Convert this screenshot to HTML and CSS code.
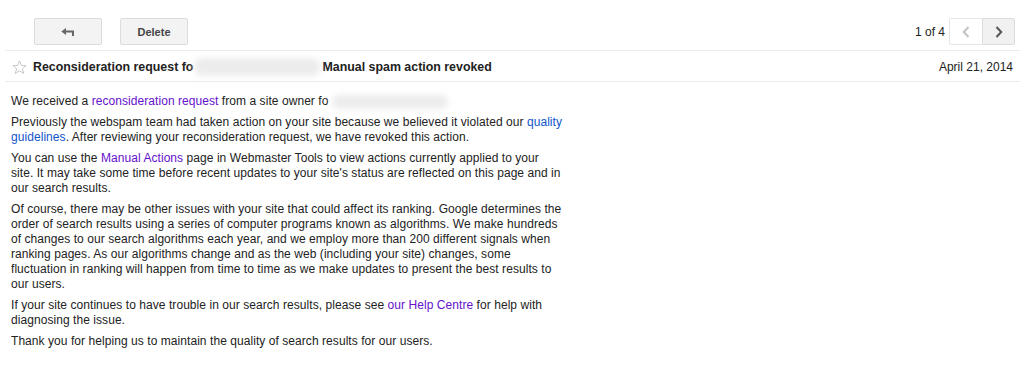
FILE: index.html
```html
<!DOCTYPE html>
<html>

    <head>
        <!-- Meta Data -->
        <meta charset="UTF-8">

        <!-- Title -->
        <title>Manual spam action revoked</title>

        <!-- Style -->
        <link rel="stylesheet" href="styles.css">
    </head>

    <body>
        <div class="page">
            <!-- Toolbar -->
            <div class="toolbar">
                <div class="toolbar-left">
                    <div class="button back-button">
                        <svg width="14" height="8" viewBox="0 0 14 8">
                            <path d="M0.3 3.5 L5 0 L5 2.5 L13 2.5 L13 8 L11 8 L11 4.5 L5 4.5 L5 7 Z" fill="#666"/>
                        </svg>
                    </div>
                    <div class="button">Delete</div>
                </div>
                <div class="toolbar-right">
                    <span class="counter">1 of 4</span>
                    <div class="nav">
                        <div class="nav-button nav-prev">
                            <svg width="8" height="12" viewBox="0 0 8 12">
                                <path d="M6.5 1 L1.8 6 L6.5 11" fill="none" stroke="#c4c4c4" stroke-width="2"/>
                            </svg>
                        </div>
                        <div class="nav-button nav-next">
                            <svg width="8" height="12" viewBox="0 0 8 12">
                                <path d="M1.5 1 L6.2 6 L1.5 11" fill="none" stroke="#555" stroke-width="2"/>
                            </svg>
                        </div>
                    </div>
                </div>
            </div>

            <!-- Header -->
            <div class="header">
                <div class="subject">
                    <svg class="star" width="15" height="15" viewBox="0 0 15 15">
                        <path d="M7.5 0.8 L9.3 5.4 L14.2 5.6 L10.4 8.7 L11.7 13.5 L7.5 10.8 L3.3 13.5 L4.6 8.7 L0.8 5.6 L5.7 5.4 Z" fill="none" stroke="#c8c8c8" stroke-width="1"/>
                    </svg>
                    <span>Reconsideration request fo</span><span class="blur blur-subject"></span><span>Manual spam action revoked</span>
                </div>
                <div class="date">April 21, 2014</div>
            </div>

            <!-- Message -->
            <div class="message">
                <p>We received a <a class="visited" href="#">reconsideration request</a> from a site owner fo<span class="blur blur-body"></span></p>
                <p>Previously the webspam team had taken action on your site because we believed it violated our <a href="#">quality guidelines</a>. After reviewing your reconsideration request, we have revoked this action.</p>
                <p>You can use the <a class="visited" href="#">Manual Actions</a> page in Webmaster Tools to view actions currently applied to your site. It may take some time before recent updates to your site's status are reflected on this page and in our search results.</p>
                <p>Of course, there may be other issues with your site that could affect its ranking. Google determines the order of search results using a series of computer programs known as algorithms. We make hundreds of changes to our search algorithms each year, and we employ more than 200 different signals when ranking pages. As our algorithms change and as the web (including your site) changes, some fluctuation in ranking will happen from time to time as we make updates to present the best results to our users.</p>
                <p>If your site continues to have trouble in our search results, please see <a class="visited" href="#">our Help Centre</a> for help with diagnosing the issue.</p>
                <p>Thank you for helping us to maintain the quality of search results for our users.</p>
            </div>
        </div>
    </body>

</html>
```

FILE: styles.css
```css
html {
    background-color: #fff;
    color: #222;
    font-family: "Liberation Sans", Arial, sans-serif;
}

body {
    margin: 0;
}

.page {
    margin: 0 4px 0 5px;
}

.toolbar {
    display: flex;
    justify-content: space-between;
    align-items: flex-start;
    height: 51px;
    padding: 18px 5px 0 29px;
    box-sizing: border-box;
    border-bottom: 1px solid #ebebeb;
}

.toolbar-left {
    display: flex;
    gap: 18px;
}

.button {
    display: flex;
    align-items: center;
    justify-content: center;
    width: 68px;
    height: 27px;
    box-sizing: border-box;
    border: 1px solid #dcdcdc;
    border-radius: 2px;
    background: #f3f3f3;
    color: #444;
    font-size: 11px;
    font-weight: bold;
}

.toolbar-right {
    display: flex;
    align-items: center;
    gap: 4px;
}

.counter {
    font-size: 12px;
    color: #222;
}

.nav {
    display: flex;
}

.nav-button {
    display: flex;
    align-items: center;
    justify-content: center;
    width: 33px;
    height: 27px;
    box-sizing: border-box;
    border: 1px solid #e6e6e6;
}

.nav-prev {
    background: #fff;
    border-right: none;
    border-radius: 2px 0 0 2px;
}

.nav-next {
    background: #f1f1f1;
    border-color: #dcdcdc;
    border-radius: 0 2px 2px 0;
}

.header {
    display: flex;
    justify-content: space-between;
    align-items: center;
    height: 31px;
    padding: 2px 7px 0 7px;
    box-sizing: border-box;
    border-bottom: 1px solid #ebebeb;
}

.subject {
    display: flex;
    align-items: center;
    font-size: 12.4px;
    font-weight: bold;
    color: #222;
}

.star {
    margin-right: 6px;
}

.date {
    font-size: 12px;
    color: #222;
}

.blur {
    display: inline-block;
    background: #ececec;
    border-radius: 8px;
    filter: blur(3px);
}

.blur-subject {
    width: 126px;
    height: 18px;
    margin: 0 2px 0 1px;
}

.blur-body {
    width: 116px;
    height: 14px;
    margin-left: 4px;
    vertical-align: middle;
}

.message {
    padding: 12px 6px;
    width: 552px;
    font-size: 12px;
    line-height: 15px;
    letter-spacing: 0.06px;
}

.message p {
    margin: 0 0 6px 0;
}

a {
    color: #15c;
    text-decoration: none;
}

a.visited {
    color: #61c;
}
```
